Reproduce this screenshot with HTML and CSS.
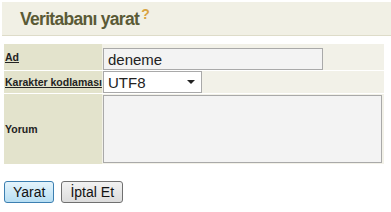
FILE: index.html
```html
<!DOCTYPE html>
<html lang="tr">
<head>
    <meta charset="UTF-8">
    <title>Veritabanı yarat</title>
    <link rel="stylesheet" href="styles.css">
</head>
<body>
    <h2 class="page-title">Veritabanı yarat<sup class="help">?</sup></h2>
    <form class="db-form">
        <table class="form-table">
            <tr class="row-name">
                <th><a href="#">Ad</a></th>
                <td><input type="text" class="field-name" value="deneme"></td>
            </tr>
            <tr>
                <th><a href="#">Karakter kodlaması</a></th>
                <td>
                    <div class="select">
                        <span>UTF8</span>
                        <span class="arrow"></span>
                    </div>
                </td>
            </tr>
            <tr class="row-comment">
                <th>Yorum</th>
                <td><textarea class="field-comment"></textarea></td>
            </tr>
        </table>
        <div class="actions">
            <button type="button" class="btn btn-primary">Yarat</button>
            <button type="button" class="btn">İptal Et</button>
        </div>
    </form>
</body>
</html>
```
FILE: styles.css
```css
body {
    margin: 0;
    padding: 0;
    background-color: #fff;
    font-family: 'Liberation Sans', Arial, sans-serif;
    color: #222;
}
.page-title {
    margin: 2px 0 0 2px;
    height: 33px;
    line-height: 35px;
    padding-left: 18px;
    background-color: #f1f0e5;
    border-bottom: 1px solid #dedcc9;
    color: #5a5a36;
    font-size: 17.5px;
    font-weight: bold;
    letter-spacing: -0.7px;
}
.page-title .help {
    color: #d9a441;
    font-size: 14px;
    vertical-align: 6px;
    line-height: 0;
    margin-left: 2px;
}
.db-form {
    margin: 7px 0 0 4px;
}
.form-table {
    border-collapse: separate;
    border-spacing: 0 1px;
    width: 380px;
}
.form-table th {
    width: 97px;
    padding: 0 0 0 1px;
    background-color: #e3e3cc;
    text-align: left;
    font-size: 10.5px;
    font-weight: bold;
    white-space: nowrap;
}
.form-table th a {
    color: #222;
}
.form-table td {
    padding: 0 0 0 1px;
    background-color: #f2f1e8;
    vertical-align: bottom;
}
.row-name td {
    padding-top: 4px;
}
.row-comment td {
    padding-top: 1px;
    padding-bottom: 1px;
}
.field-name {
    display: block;
    box-sizing: border-box;
    width: 220px;
    height: 22px;
    margin: 0;
    padding: 0 4px;
    border: 1px solid #a9a9a9;
    background-color: #f3f3f3;
    font-family: 'Liberation Sans', Arial, sans-serif;
    font-size: 15px;
    color: #222;
}
.select {
    box-sizing: border-box;
    width: 99px;
    height: 22px;
    padding: 0 6px 0 4px;
    border: 1px solid #a9a9a9;
    background-color: #fff;
    display: flex;
    align-items: center;
    justify-content: space-between;
    font-size: 15px;
}
.select .arrow {
    width: 0;
    height: 0;
    border-left: 4px solid transparent;
    border-right: 4px solid transparent;
    border-top: 4px solid #222;
}
.field-comment {
    display: block;
    box-sizing: border-box;
    width: 279px;
    height: 68px;
    margin: 0;
    border: 1px solid #a9a9a9;
    background-color: #f3f3f3;
    resize: none;
}
.actions {
    margin-top: 16px;
    display: flex;
    gap: 7px;
}
.btn {
    height: 22px;
    padding: 0 8px;
    border: 1px solid #707070;
    border-radius: 3px;
    background: linear-gradient(#f2f2f2, #dcdcdc);
    font-family: 'Liberation Sans', Arial, sans-serif;
    font-size: 14px;
    color: #111;
}
.btn-primary {
    border-color: #3c7fb1;
    background: linear-gradient(#e5f4fc, #b7def3);
}
```
